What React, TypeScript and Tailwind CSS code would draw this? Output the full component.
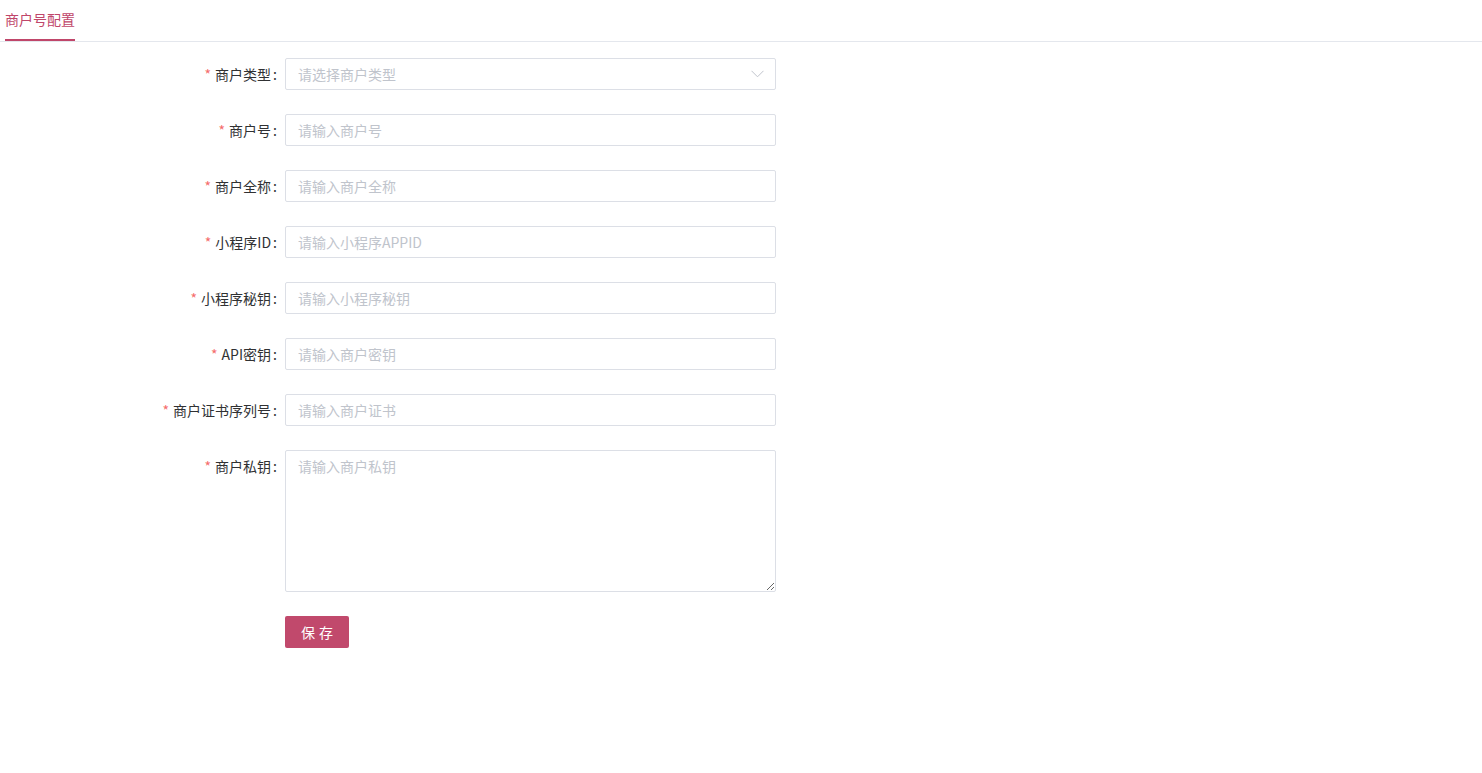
const FONT = { fontFamily: '"Noto Sans CJK SC", "Liberation Sans", sans-serif' };

interface Field {
  label: string;
  placeholder: string;
  kind?: 'select' | 'textarea';
}

const FIELDS: Field[] = [
  { label: '商户类型', placeholder: '请选择商户类型', kind: 'select' },
  { label: '商户号', placeholder: '请输入商户号' },
  { label: '商户全称', placeholder: '请输入商户全称' },
  { label: '小程序ID', placeholder: '请输入小程序APPID' },
  { label: '小程序秘钥', placeholder: '请输入小程序秘钥' },
  { label: 'API密钥', placeholder: '请输入商户密钥' },
  { label: '商户证书序列号', placeholder: '请输入商户证书' },
  { label: '商户私钥', placeholder: '请输入商户私钥', kind: 'textarea' },
];

function FormRow({ field }: { field: Field }) {
  return (
    <div className="flex items-start mb-[24px]">
      {/* Label */}
      <div className="w-[120px] pr-[8px] h-[32px] flex items-center justify-end text-[14px] text-[#303133] whitespace-nowrap">
        <span className="text-[#f56c6c] mr-[4px]">*</span>
        <span>{field.label}</span>
        <span className="ml-[2px]">:</span>
      </div>

      {/* Control */}
      {field.kind === 'select' ? (
        <div className="w-[491px] h-[32px] border border-[#dcdfe6] rounded-[2px] flex items-center justify-between pl-[12px] pr-[11px] bg-white">
          <span className="text-[14px] text-[#c0c4cc]">{field.placeholder}</span>
          <svg width="13" height="8" viewBox="0 0 13 8" fill="none">
            <path d="M0.5 0.8 L6.5 6.8 L12.5 0.8" stroke="#c0c4cc" strokeWidth="1" />
          </svg>
        </div>
      ) : field.kind === 'textarea' ? (
        <textarea
          readOnly
          placeholder={field.placeholder}
          className="w-[491px] h-[142px] border border-[#dcdfe6] rounded-[2px] px-[12px] py-[5px] text-[14px] leading-[21px] outline-none placeholder:text-[#c0c4cc] block"
          style={FONT}
        />
      ) : (
        <input
          readOnly
          placeholder={field.placeholder}
          className="w-[491px] h-[32px] border border-[#dcdfe6] rounded-[2px] px-[12px] text-[14px] outline-none placeholder:text-[#c0c4cc]"
          style={FONT}
        />
      )}
    </div>
  );
}

export default function App() {
  return (
    <div className="min-h-[773px] w-full bg-white" style={FONT}>
      {/* Tabs header */}
      <div className="flex border-b border-[#e4e7ed]">
        <div className="ml-[5px] h-[41px] flex items-center border-b-2 border-[#c0466a] text-[14px] text-[#c0466a]">
          商户号配置
        </div>
      </div>

      {/* Form */}
      <div className="pl-[165px] pt-[16px]">
        {FIELDS.map((f) => (
          <FormRow key={f.label} field={f} />
        ))}
        <div className="pl-[120px]">
          <button className="w-[64px] h-[32px] bg-[#c1496c] text-white text-[14px] rounded-[2px] tracking-[4px] pl-[4px]">
            保存
          </button>
        </div>
      </div>
    </div>
  );
}
